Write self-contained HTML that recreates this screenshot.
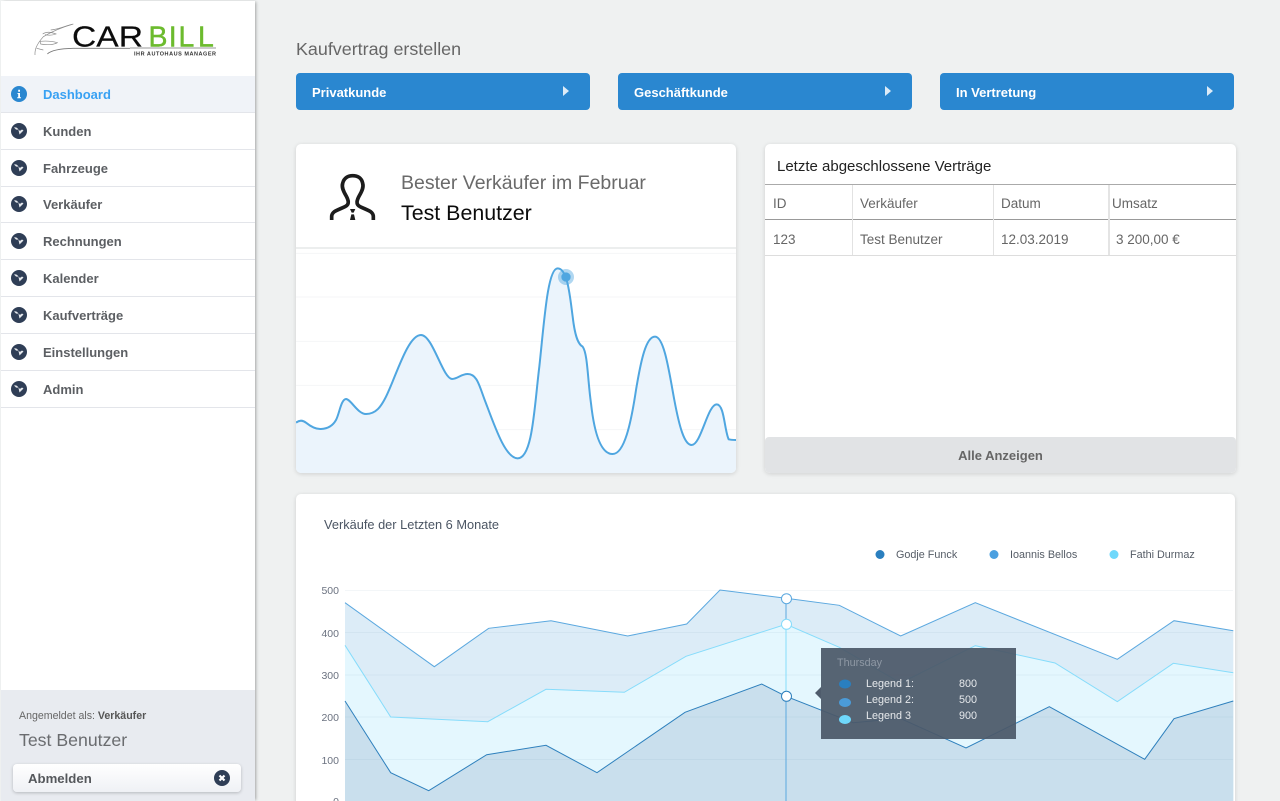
<!DOCTYPE html>
<html lang="de"><head><meta charset="utf-8"><title>Carbill Dashboard</title>
<style>
html,body{margin:0;padding:0;width:1280px;height:801px;overflow:hidden;background:#eff1f1;font-family:"Liberation Sans",sans-serif}
#page{position:relative;width:1280px;height:801px;overflow:hidden;background:#eff1f1}
.a{position:absolute;white-space:nowrap}
#side{position:absolute;left:1px;top:1px;width:254px;height:800px;background:#fff;box-shadow:2px 0 3px -1px rgba(0,0,0,.32)}
.nav{position:absolute;left:1px;width:254px;height:36px;border-bottom:1px solid #e3e5ea;box-sizing:content-box}
.nav b{position:absolute;left:42px;top:11px;font-size:13px;color:#5c5f63;line-height:16px}
.nav svg{position:absolute;left:10px;top:10px}
.btn{position:absolute;top:73px;width:294px;height:37px;background:#2a87d0;border-radius:4px;color:#fff;font-weight:bold;font-size:13px;line-height:39px;text-indent:16px}
.btn i{position:absolute;left:267px;top:13px;width:0;height:0;border-left:6px solid #dcebf7;border-top:5px solid transparent;border-bottom:5px solid transparent}
.card{position:absolute;background:#fff;border-radius:5px;box-shadow:0 1px 5px rgba(0,0,0,.14);overflow:hidden}
.cell{position:absolute;font-size:13.5px;color:#666;line-height:16px;white-space:nowrap}
</style></head><body><div id="page">
<div id="side"></div>
<svg class="a" style="left:30px;top:20px" width="190" height="40" viewBox="30 20 190 40">
<g transform="translate(30,20) scale(.3333)" fill="none" stroke="#8a8a8a" stroke-width="2">
<path d="M15 105C14 90 18 75 40 50C60 38 95 22 130 12"/>
<path d="M62 30C85 28 100 20 125 13"/>
<path d="M38 42C50 34 62 36 78 42C68 46 55 46 45 44"/>
<path d="M30 64C50 62 68 64 82 68C72 74 50 76 32 72Z"/>
<path d="M20 85L40 90"/>
<path d="M52 102C62 92 90 86 130 85H300" stroke="#777" stroke-width="2.500"/>
</g>
<path d="M130 48H216" stroke="#777" stroke-width=".8"/>
<text transform="translate(72,46.500) scale(1.18,1)" font-family="Liberation Sans" font-size="28.500" fill="#0c0c0c" stroke="#0c0c0c" stroke-width=".2">CAR</text>
<text x="148.500 168.700 178.500 198" y="46.500" font-family="Liberation Sans" font-size="28.500" fill="#6cbb2e" stroke="#6cbb2e" stroke-width=".4">BILL</text>
<text x="134" y="55.500" font-family="Liberation Sans" font-size="5.500" font-weight="bold" fill="#333" textLength="82">IHR AUTOHAUS MANAGER</text>
</svg>

<div class="nav" style="top:76px;background:#f0f3f8"><svg width="16" height="16" viewBox="0 0 16 16"><circle cx="8" cy="8" r="8" fill="#2a87d0"/><path d="M6.500 7H9V11.200H10V12.200H6.200V11.200H7.200V8H6.500ZM7.200 3.800H9V5.800H7.200Z" fill="#fff"/></svg><b style="color:#38a1f3">Dashboard</b></div>
<div class="nav" style="top:113px"><svg width="16" height="16" viewBox="-8 -8 16 16"><circle r="8" fill="#2f3e56"/><path d="M-5-3.500C-3-4-1-3-.5-1L.5 3.500L4.500-.5L3-1.500L.8 0C0-2-2-1-3-1.500Z" fill="#e6e9ed"/></svg><b>Kunden</b></div>
<div class="nav" style="top:150px"><svg width="16" height="16" viewBox="-8 -8 16 16"><circle r="8" fill="#2f3e56"/><path d="M-5-3.500C-3-4-1-3-.5-1L.5 3.500L4.500-.5L3-1.500L.8 0C0-2-2-1-3-1.500Z" fill="#e6e9ed"/></svg><b>Fahrzeuge</b></div>
<div class="nav" style="top:187px;height:35px"><svg style="top:9px" width="16" height="16" viewBox="-8 -8 16 16"><circle r="8" fill="#2f3e56"/><path d="M-5-3.500C-3-4-1-3-.5-1L.5 3.500L4.500-.5L3-1.500L.8 0C0-2-2-1-3-1.500Z" fill="#e6e9ed"/></svg><b style="top:10px">Verkäufer</b></div>
<div class="nav" style="top:223px"><svg width="16" height="16" viewBox="-8 -8 16 16"><circle r="8" fill="#2f3e56"/><path d="M-5-3.500C-3-4-1-3-.5-1L.5 3.500L4.500-.5L3-1.500L.8 0C0-2-2-1-3-1.500Z" fill="#e6e9ed"/></svg><b>Rechnungen</b></div>
<div class="nav" style="top:260px"><svg width="16" height="16" viewBox="-8 -8 16 16"><circle r="8" fill="#2f3e56"/><path d="M-5-3.500C-3-4-1-3-.5-1L.5 3.500L4.500-.5L3-1.500L.8 0C0-2-2-1-3-1.500Z" fill="#e6e9ed"/></svg><b>Kalender</b></div>
<div class="nav" style="top:297px"><svg width="16" height="16" viewBox="-8 -8 16 16"><circle r="8" fill="#2f3e56"/><path d="M-5-3.500C-3-4-1-3-.5-1L.5 3.500L4.500-.5L3-1.500L.8 0C0-2-2-1-3-1.500Z" fill="#e6e9ed"/></svg><b>Kaufverträge</b></div>
<div class="nav" style="top:334px"><svg width="16" height="16" viewBox="-8 -8 16 16"><circle r="8" fill="#2f3e56"/><path d="M-5-3.500C-3-4-1-3-.5-1L.5 3.500L4.500-.5L3-1.500L.8 0C0-2-2-1-3-1.500Z" fill="#e6e9ed"/></svg><b>Einstellungen</b></div>
<div class="nav" style="top:371px"><svg width="16" height="16" viewBox="-8 -8 16 16"><circle r="8" fill="#2f3e56"/><path d="M-5-3.500C-3-4-1-3-.5-1L.5 3.500L4.500-.5L3-1.500L.8 0C0-2-2-1-3-1.500Z" fill="#e6e9ed"/></svg><b>Admin</b></div>

<div class="a" style="left:1px;top:690px;width:254px;height:111px;background:#e8ebf0"></div>
<div class="a" style="left:19px;top:709px;font-size:10.600px;line-height:14px;color:#666">Angemeldet als: <b style="color:#555">Verkäufer</b></div>
<div class="a" style="left:19px;top:729px;font-size:17.700px;line-height:22px;color:#6a6c6f">Test Benutzer</div>
<div class="a" style="left:13px;top:764px;width:228px;height:28px;background:linear-gradient(#fff,#eff1f5);border-radius:4px;box-shadow:0 1px 3px rgba(0,0,0,.22)"></div>
<div class="a" style="left:28px;top:771px;font-size:13.200px;line-height:16px;font-weight:bold;color:#55585c">Abmelden</div>
<svg class="a" style="left:214px;top:770px" width="16" height="16" viewBox="-8 -8 16 16"><circle r="8" fill="#2f3e56"/><path d="M-2.500-2.500L2.500 2.500M2.500-2.500L-2.500 2.500" stroke="#fff" stroke-width="2.200"/></svg>

<div class="a" style="left:296px;top:39px;font-size:17.900px;line-height:20px;color:#666">Kaufvertrag erstellen</div>
<div class="btn" style="left:296px">Privatkunde<i></i></div>
<div class="btn" style="left:618px">Geschäftkunde<i></i></div>
<div class="btn" style="left:940px">In Vertretung<i></i></div>

<div class="card" style="left:296px;top:144px;width:440px;height:329px">
<svg class="a" style="left:0;top:-4px" width="440" height="333" viewBox="0 0 1320 999">
<g stroke="#f5f6f7" stroke-width="3"><path d="M0 340H1320M0 471H1320M0 604H1320M0 736H1320M0 869H1320"/></g>
<rect y="321" width="1320" height="6" fill="#eceeee"/>
<path d="M0 848C10 840 20 840 30 848C45 860 60 868 75 867C95 866 110 858 120 840C130 822 135 778 150 777C165 778 185 822 210 822C240 822 255 800 270 770C300 710 335 585 375 585C410 585 440 715 468 717C485 717 495 702 515 702C545 702 550 740 570 790C600 870 630 955 665 955C710 955 715 800 730 680C745 540 755 385 785 385C815 385 822 470 830 530C838 600 850 615 860 620C875 640 875 720 885 790C895 880 915 942 950 942C985 942 1005 850 1020 750C1035 660 1050 590 1077 590C1105 590 1120 700 1135 780C1150 860 1165 915 1187 915C1215 915 1235 793 1262 793C1285 793 1285 870 1298 898C1305 900 1315 900 1322 900V999H0Z" fill="#ebf4fc"/>
<path d="M0 848C10 840 20 840 30 848C45 860 60 868 75 867C95 866 110 858 120 840C130 822 135 778 150 777C165 778 185 822 210 822C240 822 255 800 270 770C300 710 335 585 375 585C410 585 440 715 468 717C485 717 495 702 515 702C545 702 550 740 570 790C600 870 630 955 665 955C710 955 715 800 730 680C745 540 755 385 785 385C815 385 822 470 830 530C838 600 850 615 860 620C875 640 875 720 885 790C895 880 915 942 950 942C985 942 1005 850 1020 750C1035 660 1050 590 1077 590C1105 590 1120 700 1135 780C1150 860 1165 915 1187 915C1215 915 1235 793 1262 793C1285 793 1285 870 1298 898C1305 900 1315 900 1322 900" fill="none" stroke="#4fa6e0" stroke-width="6"/>
<circle cx="810" cy="411" r="24" fill="#4fa6e0" opacity=".45"/><circle cx="810" cy="411" r="14" fill="#4fa6e0"/>
</svg>
<svg class="a" style="left:24px;top:21px" width="70" height="65" viewBox="0 0 210 195"><path d="M35 165V155C35 138 55 135 75 125C90 118 85 105 78 92C68 75 65 65 68 55C72 38 85 32 98 32C112 32 125 38 128 55C131 65 128 75 118 92C111 105 106 118 120 125C140 135 160 138 160 155V165" fill="none" stroke="#1c1c1c" stroke-width="11"/><path d="M90 132H106L101 143H95ZM94 148H102L106 165H90Z" fill="#1c1c1c"/></svg>
<div class="a" style="left:105px;top:27px;font-size:19.500px;line-height:24px;color:#6a6a6a">Bester Verkäufer im Februar</div>
<div class="a" style="left:105px;top:56px;font-size:21.400px;line-height:26px;color:#0b0b0b">Test Benutzer</div>
</div>

<div class="card" style="left:765px;top:144px;width:471px;height:329px">
<div class="a" style="left:12px;top:14px;font-size:15px;line-height:18px;color:#222">Letzte abgeschlossene Verträge</div>
<div class="a" style="left:0;top:40px;width:471px;height:1px;background:#aaa"></div>
<div class="a" style="left:0;top:75px;width:471px;height:1px;background:#999"></div>
<div class="a" style="left:0;top:111px;width:471px;height:1px;background:#ddd"></div>
<div class="a" style="left:87px;top:41px;width:1px;height:70px;background:#e2e2e2"></div>
<div class="a" style="left:228px;top:41px;width:1px;height:70px;background:#e2e2e2"></div>
<div class="a" style="left:343px;top:41px;width:2px;height:70px;background:#e4e4e4"></div>
<div class="cell" style="left:8px;top:52px">ID</div>
<div class="cell" style="left:95px;top:52px">Verkäufer</div>
<div class="cell" style="left:236px;top:52px">Datum</div>
<div class="cell" style="left:347px;top:52px">Umsatz</div>
<div class="cell" style="left:8px;top:88px">123</div>
<div class="cell" style="left:95px;top:88px">Test Benutzer</div>
<div class="cell" style="left:236px;top:88px">12.03.2019</div>
<div class="cell" style="left:351px;top:88px">3 200,00 €</div>
<div class="a" style="left:0;top:293px;width:471px;height:36px;background:#e1e3e5;text-align:center;font-size:13px;font-weight:bold;line-height:37px;color:#666;border-radius:4px 4px 5px 5px">Alle Anzeigen</div>
</div>

<div class="card" style="left:296px;top:494px;width:939px;height:320px"></div>
<div class="a" style="left:324px;top:517px;font-size:12.800px;line-height:16px;color:#4b5563">Verkäufe der Letzten 6 Monate</div>
<svg class="a" style="left:0;top:0" width="1280" height="801" viewBox="0 0 1280 801">
<circle cx="880" cy="554.500" r="4.500" fill="#2a7fbf"/><circle cx="994" cy="554.500" r="4.500" fill="#4ba0e0"/><circle cx="1114" cy="554.500" r="4.500" fill="#6fd8fb"/>
<g font-family="Liberation Sans" font-size="10.800" fill="#555c66"><text x="896" y="558">Godje Funck</text><text x="1010" y="558">Ioannis Bellos</text><text x="1130" y="558">Fathi Durmaz</text></g>
<g font-family="Liberation Sans" font-size="10.500" fill="#6b7280" text-anchor="end"><text x="339" y="594">500</text><text x="339" y="637">400</text><text x="339" y="679">300</text><text x="339" y="721">200</text><text x="339" y="764">100</text><text x="339" y="805">0</text></g>
<path d="M345 602.700L434.300 666.700L488.700 628.300L551 620.700L627.700 636L686.700 624L720 590L786 598.300L839.300 605.300L900.700 636L975.300 602.700L1117.300 659.300L1174 620.700L1233.300 630.700V801H345Z" fill="#dcecf7"/>
<path d="M345 645.300L390.700 717L487.700 721.700L546 689.300L624.300 692.300L686 656.300L786 624.300L839.300 647.300L900.700 683L975.300 645.700L1055 663L1117.300 701.700L1173.300 663.300L1233.300 672.700V801H345Z" fill="#e4f7fe"/>
<path d="M345 701L390.700 772.700L428.700 790.700L486.700 754.700L546 745.300L597 772.700L685 712.300L761.700 684L786 696.300L853.300 722.700L900 718.300L966 748L1049.300 706.700L1144.700 759.300L1174 718.700L1233.300 701V801H345Z" fill="#c9dfed"/>
<g stroke="#5c7fa0" stroke-opacity=".07"><path d="M345 590.500H1233M345 632.500H1233M345 675H1233M345 717H1233M345 759.500H1233"/></g>
<g fill="none"><path d="M345 602.700L434.300 666.700L488.700 628.300L551 620.700L627.700 636L686.700 624L720 590L786 598.300L839.300 605.300L900.700 636L975.300 602.700L1117.300 659.300L1174 620.700L1233.300 630.700" stroke="#5ba8df"/>
<path d="M345 645.300L390.700 717L487.700 721.700L546 689.300L624.300 692.300L686 656.300L786 624.300L839.300 647.300L900.700 683L975.300 645.700L1055 663L1117.300 701.700L1173.300 663.300L1233.300 672.700" stroke="#86dcfb"/>
<path d="M345 701L390.700 772.700L428.700 790.700L486.700 754.700L546 745.300L597 772.700L685 712.300L761.700 684L786 696.300L853.300 722.700L900 718.300L966 748L1049.300 706.700L1144.700 759.300L1174 718.700L1233.300 701" stroke="#2e80bd"/></g>
<path d="M786 598V624" stroke="#5ba8df"/><path d="M786 624V696" stroke="#86dcfb"/><path d="M786 696V801" stroke="#5ba8df"/>
<circle cx="786.500" cy="598.700" r="5" fill="#fff" stroke="#5ba8df"/><circle cx="786.500" cy="624.300" r="5" fill="#fff" stroke="#86dcfb"/><circle cx="786.500" cy="696.300" r="5" fill="#fff" stroke="#2e80bd"/>
<path d="M821 687L815 693L821 699Z" fill="#4f5c6c"/>
<rect x="821" y="648" width="195" height="91" fill="#4b5868" fill-opacity=".93"/>
<text x="837" y="666" font-family="Liberation Sans" font-size="10.800" fill="#8e98a4">Thursday</text>
<ellipse cx="845" cy="684" rx="6" ry="4.500" fill="#2a7fbf"/><ellipse cx="845" cy="702.500" rx="6" ry="4.500" fill="#4b9bd8"/><ellipse cx="845" cy="719.500" rx="6" ry="4.500" fill="#6fd8fb"/>
<g font-family="Liberation Sans" font-size="10.800" fill="#e6e9ec"><text x="866" y="687">Legend 1:</text><text x="866" y="703">Legend 2:</text><text x="866" y="719">Legend 3</text><text x="959" y="687">800</text><text x="959" y="703">500</text><text x="959" y="719">900</text></g>
</svg>
</div></body></html>
